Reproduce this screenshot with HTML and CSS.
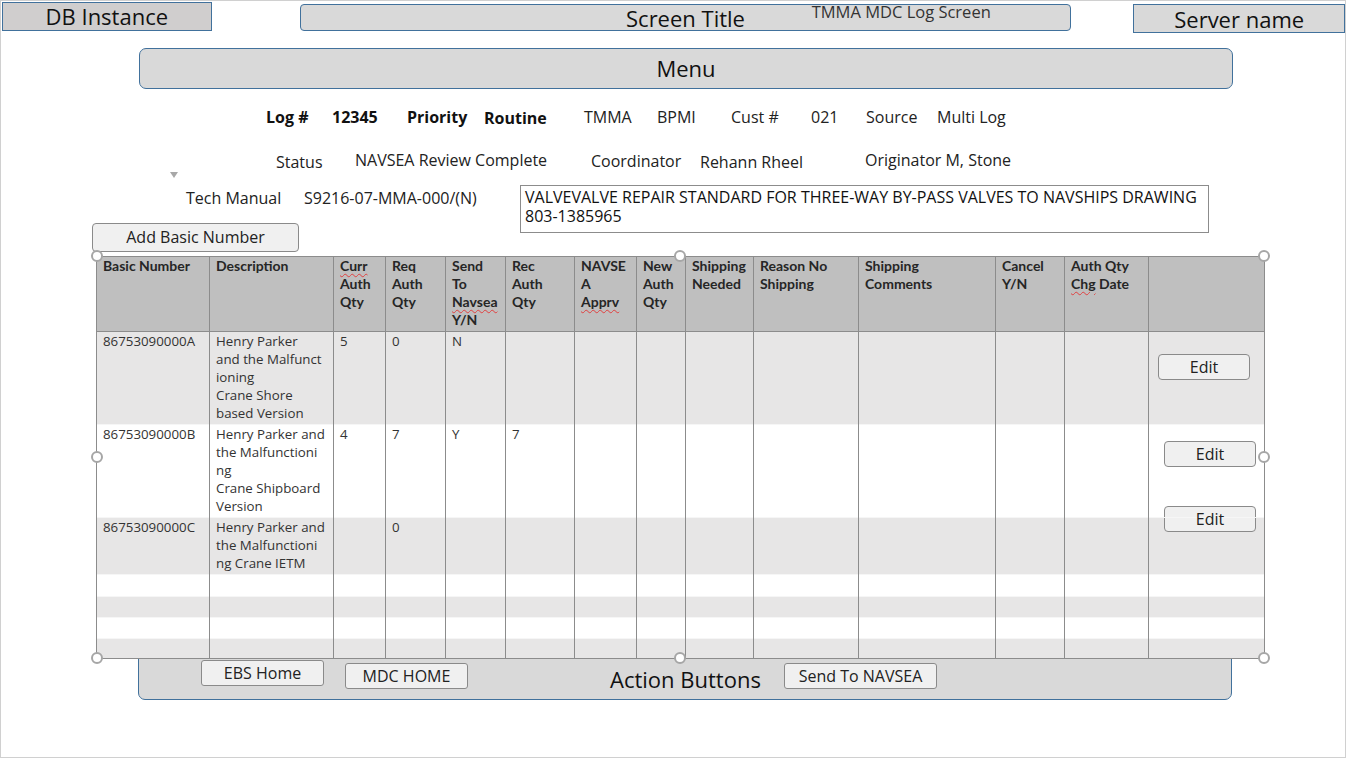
FILE: index.html
```html
<!DOCTYPE html>
<html lang="en">
<head>
<meta charset="utf-8">
<title>TMMA MDC Log Screen</title>
<link rel="stylesheet" href="styles.css">
</head>
<body>
<div class="frame">
  <div class="topbar">
    <div class="db-box">DB Instance</div>
    <div class="title-box">
      <span class="title-text">Screen Title</span>
      <span class="title-note">TMMA MDC Log Screen</span>
    </div>
    <div class="server-box">Server name</div>
  </div>

  <div class="menu-bar">Menu</div>

  <div class="info-row row1">
    <span class="b">Log #</span>
    <span class="b">12345</span>
    <span class="b">Priority</span>
    <span class="b lo1">Routine</span>
    <span>TMMA</span>
    <span>BPMI</span>
    <span>Cust #</span>
    <span>021</span>
    <span>Source</span>
    <span>Multi Log</span>
  </div>

  <div class="info-row row2">
    <span class="lo2">Status</span>
    <span>NAVSEA Review Complete</span>
    <span class="lo1">Coordinator</span>
    <span class="lo2">Rehann Rheel</span>
    <span>Originator M, Stone</span>
  </div>

  <div class="dropdown-tri"></div>

  <div class="row3">
    <div class="row3-left">
      <div class="tm-line">
        <span>Tech Manual</span>
        <span>S9216-07-MMA-000/(N)</span>
      </div>
      <button class="btn add-btn">Add Basic Number</button>
    </div>
    <div class="tm-desc">VALVEVALVE REPAIR STANDARD FOR THREE-WAY BY-PASS VALVES TO NAVSHIPS DRAWING 803-1385965</div>
  </div>

  <div class="table-wrap">
    <table class="grid">
      <colgroup>
        <col style="width:113px"><col style="width:124px"><col style="width:52px"><col style="width:60px">
        <col style="width:60px"><col style="width:69px"><col style="width:62px"><col style="width:49px">
        <col style="width:68px"><col style="width:105px"><col style="width:137px"><col style="width:69px">
        <col style="width:84px"><col style="width:116px">
      </colgroup>
      <thead>
        <tr class="hdr">
          <th>Basic Number</th>
          <th>Description</th>
          <th><span class="sp">Curr</span><br>Auth<br>Qty</th>
          <th>Req<br>Auth<br>Qty</th>
          <th>Send<br>To<br><span class="sp">Navsea</span><br>Y/N</th>
          <th>Rec<br>Auth<br>Qty</th>
          <th>NAVSE<br>A<br><span class="sp">Apprv</span></th>
          <th>New<br>Auth<br>Qty</th>
          <th>Shipping<br>Needed</th>
          <th>Reason No<br>Shipping</th>
          <th>Shipping<br>Comments</th>
          <th>Cancel<br>Y/N</th>
          <th>Auth Qty<br><span class="sp">Chg</span> Date</th>
          <th></th>
        </tr>
      </thead>
      <tbody>
        <tr class="r-a alt">
          <td>86753090000A</td>
          <td>Henry Parker<br>and the Malfunct<br>ioning<br>Crane Shore<br>based Version</td>
          <td>5</td><td>0</td><td>N</td><td></td><td></td><td></td><td></td><td></td><td></td><td></td><td></td>
          <td><button class="btn edit e1">Edit</button></td>
        </tr>
        <tr class="r-b">
          <td>86753090000B</td>
          <td>Henry Parker and<br>the Malfunctioni<br>ng<br>Crane Shipboard<br>Version</td>
          <td>4</td><td>7</td><td>Y</td><td>7</td><td></td><td></td><td></td><td></td><td></td><td></td><td></td>
          <td><button class="btn edit e2">Edit</button></td>
        </tr>
        <tr class="r-c alt">
          <td>86753090000C</td>
          <td>Henry Parker and<br>the Malfunctioni<br>ng Crane IETM</td>
          <td></td><td>0</td><td></td><td></td><td></td><td></td><td></td><td></td><td></td><td></td><td></td>
          <td><button class="btn edit e3">Edit</button></td>
        </tr>
        <tr class="r-e1"><td></td><td></td><td></td><td></td><td></td><td></td><td></td><td></td><td></td><td></td><td></td><td></td><td></td><td></td></tr>
        <tr class="r-e2 alt"><td></td><td></td><td></td><td></td><td></td><td></td><td></td><td></td><td></td><td></td><td></td><td></td><td></td><td></td></tr>
        <tr class="r-e3"><td></td><td></td><td></td><td></td><td></td><td></td><td></td><td></td><td></td><td></td><td></td><td></td><td></td><td></td></tr>
        <tr class="r-e4 alt"><td></td><td></td><td></td><td></td><td></td><td></td><td></td><td></td><td></td><td></td><td></td><td></td><td></td><td></td></tr>
      </tbody>
    </table>
    <span class="handle h-tl"></span>
    <span class="handle h-tc"></span>
    <span class="handle h-tr"></span>
    <span class="handle h-ml"></span>
    <span class="handle h-mr"></span>
    <span class="handle h-bl"></span>
    <span class="handle h-bc"></span>
    <span class="handle h-br"></span>
  </div>

  <div class="action-bar">
    <button class="btn act ebs">EBS Home</button>
    <button class="btn act mdc">MDC HOME</button>
    <span class="action-title">Action Buttons</span>
    <button class="btn act send">Send To NAVSEA</button>
  </div>
</div>
</body>
</html>
```

FILE: styles.css
```css
* { box-sizing: border-box; }

html, body {
  margin: 0;
  padding: 0;
  background: #ffffff;
}

body {
  font-family: "Open Sans", "Noto Sans", sans-serif;
  color: #1a1a1a;
}

.frame {
  width: 1346px;
  height: 758px;
  border: 1px solid #d0d0d0;
  overflow: hidden;
}

/* ---------- top bar ---------- */
.topbar {
  display: flex;
  align-items: flex-start;
  height: 32px;
}

.db-box {
  margin: 1px 0 0 1px;
  width: 210px;
  height: 29px;
  background: #d0cece;
  border: 1px solid #41719c;
  font-size: 22px;
  line-height: 27px;
  text-align: center;
  color: #111;
  white-space: nowrap;
}

.title-box {
  position: relative;
  margin: 3px 0 0 88px;
  width: 773px;
  height: 27px;
  background: #d9d9d9;
  border: 1px solid #41719c;
  border-radius: 4px;
  text-align: center;
}

.title-text {
  font-size: 22px;
  line-height: 26px;
  color: #111;
}

.title-note {
  position: absolute;
  left: 511px;
  top: -4px;
  font-size: 16.5px;
  line-height: 22px;
  color: #333;
  white-space: nowrap;
}

.server-box {
  margin: 3px 0 0 62px;
  width: 212px;
  height: 29px;
  background: #d9d9d9;
  border: 1px solid #41719c;
  font-size: 22px;
  line-height: 28px;
  text-align: center;
  color: #111;
  white-space: nowrap;
}

/* ---------- menu ---------- */
.menu-bar {
  margin: 15px 0 0 138px;
  width: 1094px;
  height: 41px;
  background: #d9d9d9;
  border: 1px solid #41719c;
  border-radius: 7px;
  font-size: 22px;
  line-height: 39px;
  text-align: center;
  color: #111;
}

/* ---------- info rows ---------- */
.info-row {
  display: grid;
  grid-template-rows: 24px;
  height: 24px;
  font-size: 16px;
  line-height: 24px;
  color: #222;
  white-space: nowrap;
}

.info-row .b { font-weight: 700; color: #111; }
.info-row .lo1 { padding-top: 1px; }
.info-row .lo2 { padding-top: 2px; }

.row1 {
  margin-top: 16px;
  padding-left: 265px;
  grid-template-columns: 66px 75px 77px 100px 73px 74px 80px 55px 71px auto;
}

.row2 {
  margin-top: 19px;
  padding-left: 275px;
  grid-template-columns: 79px 236px 109px 165px auto;
}

.dropdown-tri {
  margin-left: 169px;
  width: 0;
  height: 0;
  border-left: 4px solid transparent;
  border-right: 4px solid transparent;
  border-top: 6px solid #a8a8a8;
}

.row3 {
  display: flex;
  margin-top: 7px;
}

.row3-left {
  margin-left: 91px;
  width: 428px;
  height: 67px;
  display: flex;
  flex-direction: column;
  justify-content: space-between;
}

.tm-line {
  display: grid;
  grid-template-columns: 118px auto;
  padding-left: 94px;
  margin-top: 1px;
  font-size: 16px;
  line-height: 24px;
  color: #222;
  white-space: nowrap;
}

.tm-desc {
  width: 689px;
  height: 48px;
  border: 1px solid #8c8c8c;
  padding: 2px 4px;
  font-size: 16px;
  line-height: 19px;
  color: #111;
}

/* ---------- buttons ---------- */
.btn {
  display: block;
  margin: 0;
  padding: 0;
  font-family: "Open Sans", "Noto Sans", sans-serif;
  font-size: 16px;
  color: #222;
  background: #f0f0f0;
  border: 1px solid #8a8a8a;
  border-radius: 4px;
  text-align: center;
}

.add-btn {
  width: 207px;
  height: 29px;
  line-height: 25px;
}

/* ---------- table ---------- */
.table-wrap {
  position: relative;
  z-index: 2;
  margin: 4px 0 0 95px;
  width: 1169px;
}

.grid {
  border-collapse: collapse;
  table-layout: fixed;
  width: 1169px;
  border: 1px solid #8c8c8c;
  background: #ffffff;
}

.grid th,
.grid td {
  border-left: 1px solid #8c8c8c;
  border-right: 1px solid #8c8c8c;
  vertical-align: top;
  padding: 0 2px 0 6px;
  line-height: 18px;
  white-space: nowrap;
  overflow: visible;
}

.grid th {
  font-family: "Lato", "Liberation Sans", sans-serif;
  font-weight: 700;
  font-size: 14px;
  color: #262626;
  text-align: left;
  background: #bfbfbf;
  border-bottom: 1px solid #8c8c8c;
}

.grid td {
  font-size: 13.3px;
  color: #333;
}

.grid tbody tr { background: #ffffff; }
.grid tbody tr.alt { background: #e7e6e6; }
.grid tbody tr + tr td { border-top: 1px solid #f6f6f6; }

.hdr { height: 75px; }
.r-a { height: 93px; }
.r-b { height: 93px; }
.r-c { height: 57px; }
.r-e1 { height: 22px; }
.r-e2 { height: 21px; }
.r-e3 { height: 21px; }
.r-e4 { height: 20px; }

.sp {
  text-decoration: underline wavy #e04040;
  text-decoration-thickness: 1px;
  text-underline-offset: 2px;
}

.edit {
  height: 26px;
  line-height: 23px;
}

.e1 { width: 92px; margin: 22px 0 0 3px; }
.e2 { width: 92px; margin: 16px 0 0 9px; }
.e3 { width: 92px; margin: -12px 0 0 9px; }

/* selection handles */
.handle {
  position: absolute;
  width: 12px;
  height: 12px;
  margin: -6px 0 0 -6px;
  border: 2px solid #a6a6a6;
  border-radius: 50%;
  background: #ffffff;
}

.h-tl { left: 1px;    top: 0; }
.h-tc { left: 584px;  top: 0; }
.h-tr { left: 1168px; top: 0; }
.h-ml { left: 1px;    top: 201px; }
.h-mr { left: 1168px; top: 201px; }
.h-bl { left: 1px;    top: 402px; }
.h-bc { left: 584px;  top: 402px; }
.h-br { left: 1168px; top: 402px; }

/* ---------- action bar ---------- */
.action-bar {
  position: relative;
  z-index: 1;
  display: flex;
  align-items: flex-start;
  margin: -3px 0 0 137px;
  width: 1094px;
  height: 44px;
  background: #d9d9d9;
  border: 1px solid #41719c;
  border-radius: 0 0 7px 7px;
  padding-left: 62px;
}

.act {
  height: 26px;
  line-height: 23px;
  border-radius: 3px;
}

.ebs  { width: 123px; margin-top: 3px; }
.mdc  { width: 123px; margin: 6px 0 0 21px; }
.send { width: 153px; margin-top: 6px; }

.action-title {
  width: 316px;
  padding-left: 142px;
  margin-top: 9px;
  font-size: 22px;
  line-height: 26px;
  color: #111;
  white-space: nowrap;
}
```
